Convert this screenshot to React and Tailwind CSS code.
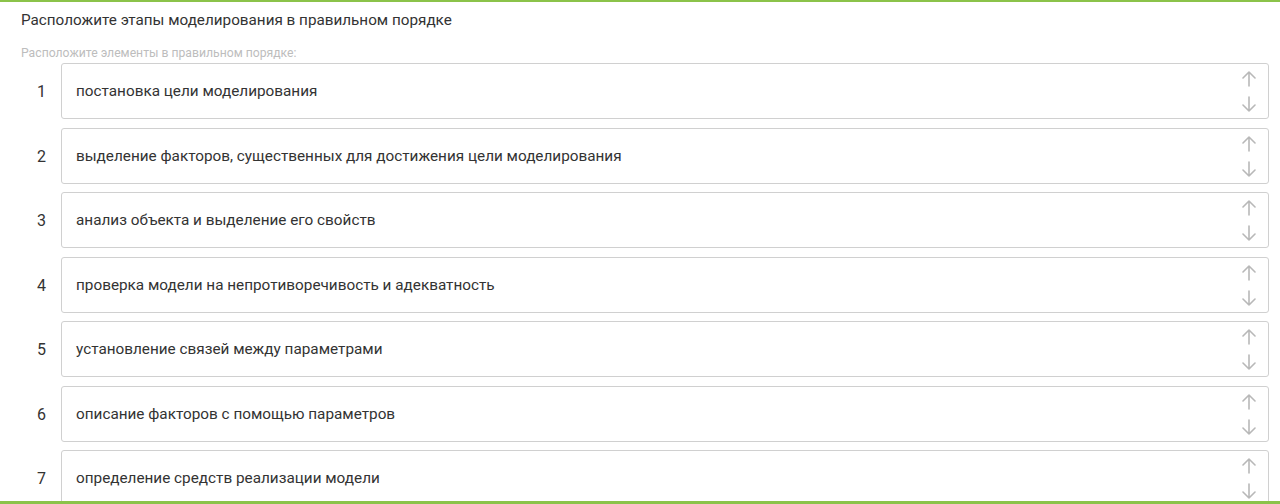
const steps = [
  'постановка цели моделирования',
  'выделение факторов, существенных для достижения цели моделирования',
  'анализ объекта и выделение его свойств',
  'проверка модели на непротиворечивость и адекватность',
  'установление связей между параметрами',
  'описание факторов с помощью параметров',
  'определение средств реализации модели',
]

function Arrow({ down }) {
  return (
    <svg width="14" height="16" viewBox="0 0 14 16" fill="none" stroke="#b8b8b8" strokeWidth="1.6" strokeLinecap="round" strokeLinejoin="round">
      {down ? (
        <path d="M7 1V15M1 9L7 15L13 9" />
      ) : (
        <path d="M7 15V1M1 7L7 1L13 7" />
      )}
    </svg>
  )
}

export default function App() {
  return (
    <div className="relative h-[504px] overflow-hidden bg-white border-t-2 border-[#8bc34a] font-['Roboto',sans-serif]">
      <div className="pl-[21px] pr-[11px]">
        <h1 className="text-[15.25px] leading-[20px] text-[#333] mt-[8px]">Расположите этапы моделирования в правильном порядке</h1>
        <p className="text-[12.2px] leading-[16px] text-[#bdbdbd] mt-[15px]">Расположите элементы в правильном порядке:</p>
        <div className="flex flex-col gap-[8.5px] mt-[2px]">
          {steps.map((s, i) => (
            <div key={i} className="flex items-center">
              <div className="w-[40px] text-[16px] text-[#333] text-center pl-[1px] pt-[2px]">{i + 1}</div>
              <div className="flex-1 h-[56px] flex items-center justify-between border border-[#d0d0d0] rounded-[3px] pl-[14px] pr-[12px]">
                <span className="text-[15.3px] text-[#333] pt-[1px]">{s}</span>
                <div className="flex flex-col items-center gap-[9px] pt-[1px]">
                  <Arrow />
                  <Arrow down />
                </div>
              </div>
            </div>
          ))}
        </div>
      </div>
      <div className="absolute left-0 right-0 bottom-0 h-[3px] bg-[#8bc34a]" />
    </div>
  )
}
